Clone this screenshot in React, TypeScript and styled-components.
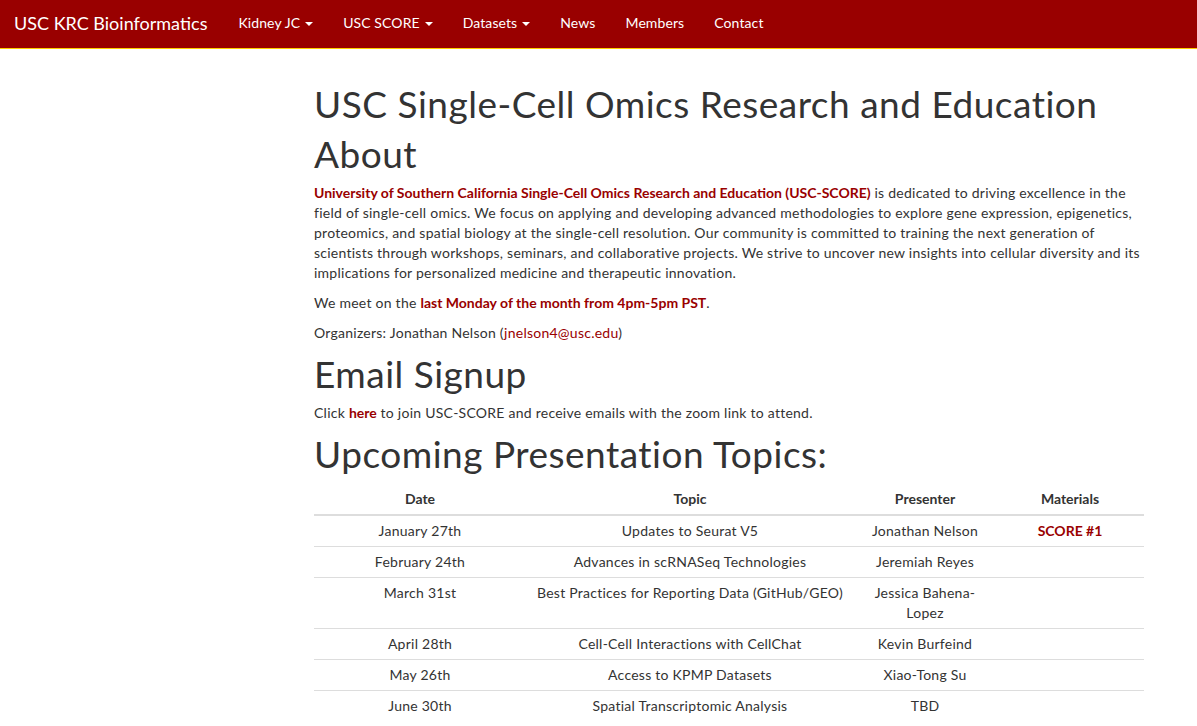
import React from 'react'
import styled, { createGlobalStyle } from 'styled-components'

const GlobalStyle = createGlobalStyle`
  html, body {
    margin: 0;
    padding: 0;
    background: #fff;
  }
  body {
    font-family: Lato, "Open Sans", sans-serif;
    font-size: 14px;
    line-height: 20px;
    letter-spacing: 0.25px;
    color: #333;
  }
`

const NavBar = styled.nav`
  display: flex;
  align-items: flex-start;
  height: 48px;
  background: #990000;
  border-bottom: 1px solid #ffcc00;
`

const Brand = styled.a`
  padding: 0 15px 0 14px;
  font-size: 18px;
  line-height: 46px;
  letter-spacing: 0;
  color: #fff;
  text-decoration: none;
  white-space: nowrap;
`

const NavList = styled.ul`
  display: flex;
  margin: 0;
  padding: 0 0 0 1px;
  list-style: none;
`

const NavItem = styled.li`
  padding: 0 15px;
  color: #fff;
  font-size: 14px;
  line-height: 46px;
  letter-spacing: 0.1px;
  white-space: nowrap;
`

const Caret = styled.span`
  display: inline-block;
  width: 0;
  height: 0;
  margin-left: 5px;
  vertical-align: middle;
  border-top: 4px solid #fff;
  border-left: 4px solid transparent;
  border-right: 4px solid transparent;
`

const Main = styled.main`
  width: 830px;
  margin: 34px 0 0 314px;
`

const Heading = styled.h1`
  margin: 0 0 8px;
  font-size: 37px;
  font-weight: 400;
  line-height: 42px;
  letter-spacing: 0.5px;
  color: #333;
`

const Para = styled.p`
  margin: 0 0 10px;
`

const Link = styled.a<{ $bold?: boolean }>`
  color: #990000;
  font-weight: ${p => (p.$bold ? 700 : 400)};
  letter-spacing: ${p => (p.$bold ? '0' : '0.25px')};
  text-decoration: none;
`

const Table = styled.table`
  width: 100%;
  border-collapse: collapse;
  table-layout: fixed;
  margin-top: 1px;
`

const Th = styled.th`
  padding: 6px 5px 5px;
  text-align: center;
  font-weight: 700;
  letter-spacing: 0;
  border-bottom: 2px solid #ddd;
`

const Td = styled.td`
  padding: 5px;
  text-align: center;
  border-top: 1px solid #ddd;
  vertical-align: top;
`

type Row = { date: string; topic: string; presenter: string; material?: string }

const rows: Row[] = [
  { date: 'January 27th', topic: 'Updates to Seurat V5', presenter: 'Jonathan Nelson', material: 'SCORE #1' },
  { date: 'February 24th', topic: 'Advances in scRNASeq Technologies', presenter: 'Jeremiah Reyes' },
  { date: 'March 31st', topic: 'Best Practices for Reporting Data (GitHub/GEO)', presenter: 'Jessica Bahena-Lopez' },
  { date: 'April 28th', topic: 'Cell-Cell Interactions with CellChat', presenter: 'Kevin Burfeind' },
  { date: 'May 26th', topic: 'Access to KPMP Datasets', presenter: 'Xiao-Tong Su' },
  { date: 'June 30th', topic: 'Spatial Transcriptomic Analysis', presenter: 'TBD' },
]

const navItems = [
  { label: 'Kidney JC', menu: true },
  { label: 'USC SCORE', menu: true },
  { label: 'Datasets', menu: true },
  { label: 'News' },
  { label: 'Members' },
  { label: 'Contact' },
]

export default function App() {
  return (
    <>
      <GlobalStyle />
      <NavBar>
        <Brand href="#">USC KRC Bioinformatics</Brand>
        <NavList>
          {navItems.map(item => (
            <NavItem key={item.label}>
              {item.label}
              {item.menu && <Caret />}
            </NavItem>
          ))}
        </NavList>
      </NavBar>

      <Main>
        <Heading>USC Single-Cell Omics Research and Education</Heading>
        <Heading as="h2">About</Heading>
        <Para>
          <Link href="#" $bold>University of Southern California Single-Cell Omics Research and Education (USC-SCORE)</Link> is
          dedicated to driving excellence in the field of single-cell omics. We focus on applying and developing advanced
          methodologies to explore gene expression, epigenetics, proteomics, and spatial biology at the single-cell
          resolution. Our community is committed to training the next generation of scientists through workshops,
          seminars, and collaborative projects. We strive to uncover new insights into cellular diversity and its
          implications for personalized medicine and therapeutic innovation.
        </Para>
        <Para>
          We meet on the <Link href="#" $bold>last Monday of the month from 4pm-5pm PST</Link>.
        </Para>
        <Para>
          Organizers: Jonathan Nelson (<Link href="#">jnelson4@usc.edu</Link>)
        </Para>

        <Heading as="h2">Email Signup</Heading>
        <Para>
          Click <Link href="#" $bold>here</Link> to join USC-SCORE and receive emails with the zoom link to attend.
        </Para>

        <Heading as="h2">Upcoming Presentation Topics:</Heading>
        <Table>
          <colgroup>
            <col style={{ width: 212 }} />
            <col style={{ width: 328 }} />
            <col style={{ width: 142 }} />
            <col style={{ width: 148 }} />
          </colgroup>
          <thead>
            <tr>
              <Th>Date</Th>
              <Th>Topic</Th>
              <Th>Presenter</Th>
              <Th>Materials</Th>
            </tr>
          </thead>
          <tbody>
            {rows.map(r => (
              <tr key={r.date}>
                <Td>{r.date}</Td>
                <Td>{r.topic}</Td>
                <Td>{r.presenter}</Td>
                <Td>{r.material && <Link href="#" $bold>{r.material}</Link>}</Td>
              </tr>
            ))}
          </tbody>
        </Table>
      </Main>
    </>
  )
}
